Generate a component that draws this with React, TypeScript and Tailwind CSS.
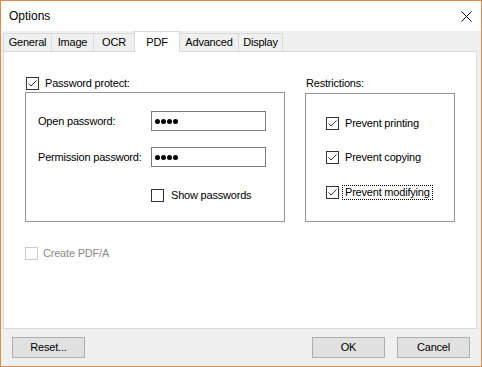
import React from "react";

function CheckBox({ checked = false, disabled = false }: { checked?: boolean; disabled?: boolean }) {
  return (
    <svg width="13" height="13" viewBox="0 0 13 13" className="shrink-0 block">
      <rect x="0.5" y="0.5" width="12" height="12" fill="#ffffff" stroke={disabled ? "#cccccc" : "#333333"} strokeWidth="1" />
      {checked && (
        <polyline points="2.5,6.5 5,9 10.5,3.5" fill="none" stroke="#333333" strokeWidth="1" />
      )}
    </svg>
  );
}

function Dots() {
  return (
    <div className="flex items-center gap-[1px]">
      <span className="block w-[5px] h-[5px] rounded-full bg-black" />
      <span className="block w-[5px] h-[5px] rounded-full bg-black" />
      <span className="block w-[5px] h-[5px] rounded-full bg-black" />
      <span className="block w-[5px] h-[5px] rounded-full bg-black" />
    </div>
  );
}

function Tab({ label, w, cls }: { label: string; w: string; cls: string }) {
  return (
    <div className={`${w} h-[18px] flex items-center justify-center bg-[#f0f0f0] border-t border-[#d9d9d9] ${cls}`}>
      <span className="leading-none">{label}</span>
    </div>
  );
}

export default function App() {
  return (
    <div
      className="w-[482px] h-[367px] border border-[#de8c4c] flex flex-col bg-[#f0f0f0] text-black text-[11px] tracking-[-0.2px]"
      style={{ fontFamily: '"Liberation Sans", Arial, sans-serif' }}
    >
      {/* Title bar */}
      <div className="h-[30px] bg-white flex items-center justify-between pl-[8px] pr-[9px] shrink-0">
        <span className="text-[12px] tracking-normal">Options</span>
        <svg width="11" height="11" viewBox="0 0 11 11" className="block">
          <line x1="0.5" y1="0.5" x2="10.5" y2="10.5" stroke="#000" strokeWidth="1" />
          <line x1="10.5" y1="0.5" x2="0.5" y2="10.5" stroke="#000" strokeWidth="1" />
        </svg>
      </div>

      {/* Tabs */}
      <div className="flex items-end h-[20px] ml-[2px] shrink-0">
        <Tab label="General" w="w-[48px]" cls="border-l" />
        <Tab label="Image" w="w-[42px]" cls="border-l" />
        <Tab label="OCR" w="w-[41px]" cls="border-l" />
        <div className="relative z-10 w-[46px] h-[21px] -mb-px bg-white border-l border-t border-r border-[#d9d9d9] flex items-start justify-center pt-[5px]">
          <span className="leading-none">PDF</span>
        </div>
        <Tab label="Advanced" w="w-[58px]" cls="" />
        <Tab label="Display" w="w-[45px]" cls="border-l border-r" />
      </div>

      {/* Panel */}
      <div className="ml-[2px] w-[474px] h-[278px] bg-white border border-[#d9d9d9] flex pl-[21px] pt-[25px] gap-[20px] shrink-0">
        {/* Left column */}
        <div className="flex flex-col w-[260px]">
          <div className="h-[13px] flex items-center gap-[6px] ml-[1px]">
            <CheckBox checked />
            <span className="leading-none">Password protect:</span>
          </div>
          <div className="mt-[2px] h-[130px] w-[260px] border border-[#969696] flex flex-col pt-[18px] pl-[12px]">
            <div className="flex items-center h-[20px]">
              <span className="w-[113px] leading-none">Open password:</span>
              <div className="w-[115px] h-[20px] border border-[#7a7a7a] bg-white flex items-center pl-[3px]">
                <Dots />
              </div>
            </div>
            <div className="flex items-center h-[20px] mt-[16px]">
              <span className="w-[113px] leading-none">Permission password:</span>
              <div className="w-[115px] h-[20px] border border-[#7a7a7a] bg-white flex items-center pl-[3px]">
                <Dots />
              </div>
            </div>
            <div className="flex items-center h-[13px] mt-[22px]">
              <div className="w-[113px]" />
              <div className="flex items-center gap-[7px]">
                <CheckBox />
                <span className="leading-none">Show passwords</span>
              </div>
            </div>
          </div>
          <div className="mt-[25px] h-[13px] flex items-center gap-[5px]">
            <CheckBox disabled />
            <span className="leading-none text-[#8a8a8a]">Create PDF/A</span>
          </div>
        </div>

        {/* Right column */}
        <div className="flex flex-col w-[150px]">
          <div className="h-[12px] flex items-center ml-[1px]">
            <span className="leading-none">Restrictions:</span>
          </div>
          <div className="mt-[4px] h-[129px] w-[150px] border border-[#969696] flex flex-col pt-[23px] pl-[20px]">
            <div className="h-[13px] flex items-center gap-[3px]">
              <CheckBox checked />
              <span className="leading-none border border-transparent px-[2px] py-[1px]">Prevent printing</span>
            </div>
            <div className="h-[13px] flex items-center gap-[3px] mt-[21px]">
              <CheckBox checked />
              <span className="leading-none border border-transparent px-[2px] py-[1px]">Prevent copying</span>
            </div>
            <div className="h-[13px] flex items-center gap-[3px] mt-[22px]">
              <CheckBox checked />
              <span className="leading-none border border-dotted border-black px-[2px] py-[1px]">Prevent modifying</span>
            </div>
          </div>
        </div>
      </div>

      {/* Buttons */}
      <div className="flex items-start mt-[8px] pl-[11px] pr-[11px]">
        <button className="w-[73px] h-[21px] bg-[#e1e1e1] border border-[#adadad] flex items-center justify-center leading-none">
          Reset...
        </button>
        <div className="flex-1" />
        <button className="w-[73px] h-[21px] bg-[#e1e1e1] border border-[#adadad] flex items-center justify-center leading-none">
          OK
        </button>
        <button className="ml-[12px] w-[73px] h-[21px] bg-[#e1e1e1] border border-[#adadad] flex items-center justify-center leading-none">
          Cancel
        </button>
      </div>
    </div>
  );
}
